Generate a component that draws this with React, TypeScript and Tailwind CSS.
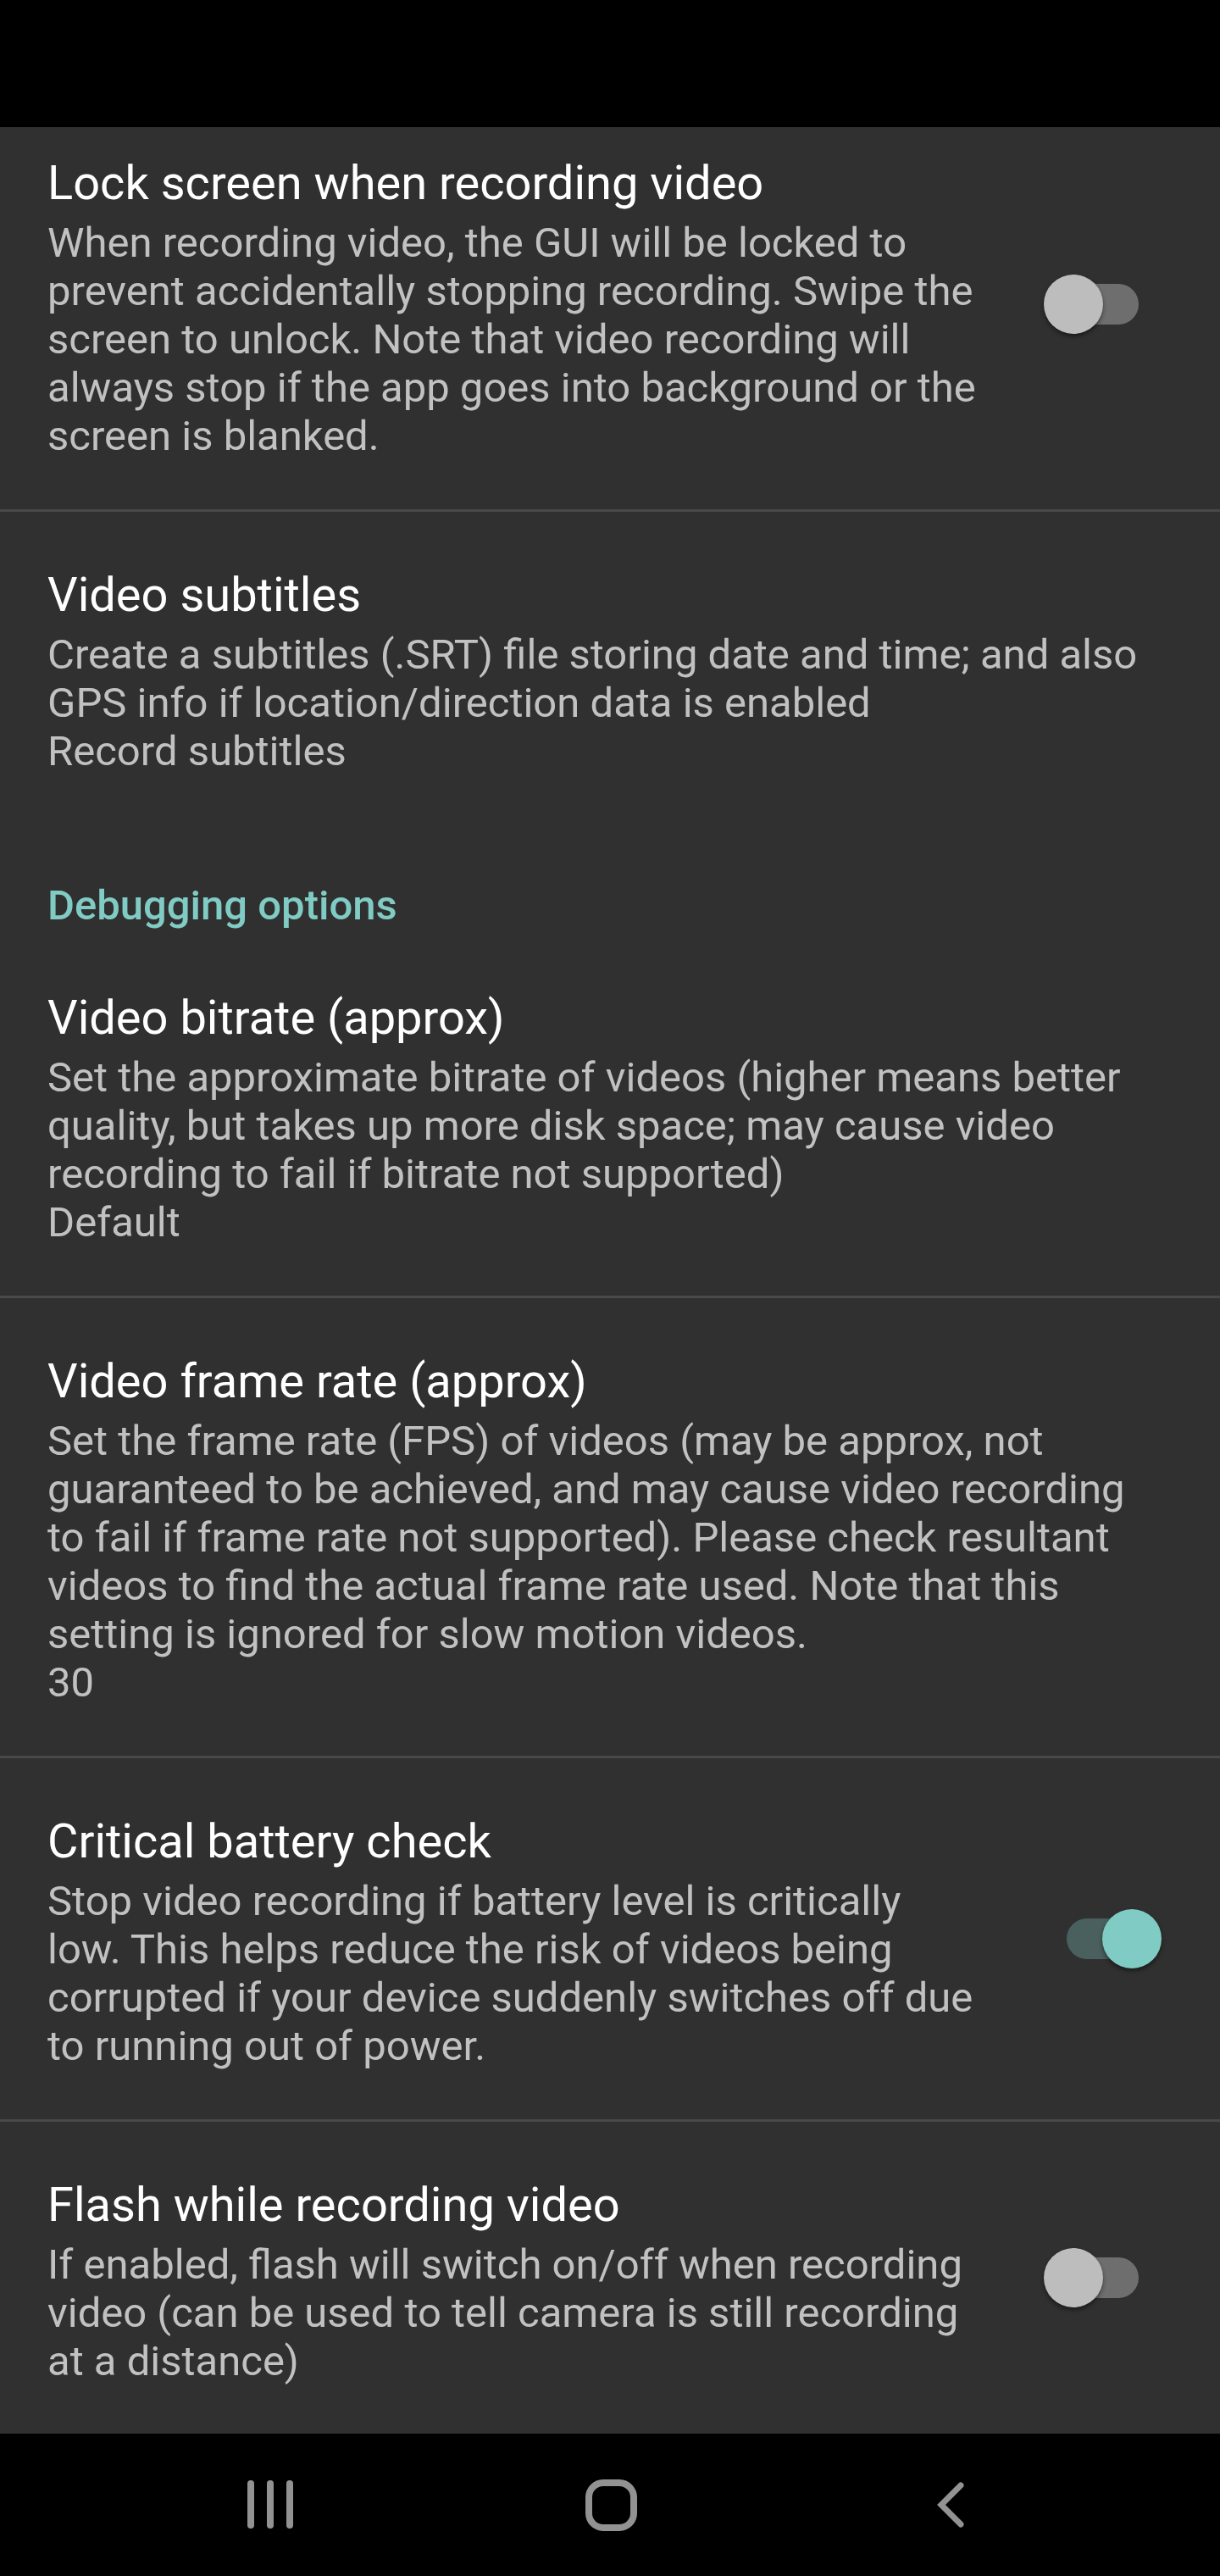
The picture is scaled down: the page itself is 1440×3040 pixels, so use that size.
import React from "react";

const font = { fontFamily: "Roboto, 'Noto Sans', Arial, sans-serif" };

function Switch({ on }: { on: boolean }) {
  return (
    <div className="relative ml-[57px] mb-[8px] h-[70px] w-[139px] shrink-0">
      <div
        className={
          "absolute left-[27px] top-[11px] h-[48px] w-[85px] rounded-full " +
          (on ? "bg-[#4a605e]" : "bg-[#6e6e6e]")
        }
      />
      <div
        className={
          "absolute top-0 h-[70px] w-[70px] rounded-full shadow-[0_3px_5px_rgba(0,0,0,0.45)] " +
          (on ? "right-0 bg-[#80cbc4]" : "left-0 bg-[#bdbdbd]")
        }
      />
    </div>
  );
}

function Pref({
  title,
  lines,
  toggle,
  pt = "pt-[65px]",
}: {
  title: string;
  lines: string[];
  toggle?: "on" | "off";
  pt?: string;
}) {
  return (
    <div className={"flex items-center pb-[58px] pl-[56px] " + pt + (toggle ? " pr-[69px]" : " pr-[56px]")}>
      <div className="min-w-0 flex-1">
        <div className="text-[56px] leading-[66px] text-white">{title}</div>
        <div className="mt-[9px] text-[49px] leading-[57px] text-[#c1c1c1]">
          {lines.map((l, i) => (
            <div key={i} className="whitespace-nowrap">
              {l}
            </div>
          ))}
        </div>
      </div>
      {toggle && <Switch on={toggle === "on"} />}
    </div>
  );
}

function Divider() {
  return <div className="h-[3px] w-full bg-[#494949]" />;
}

export default function App() {
  return (
    <div className="flex h-[3040px] w-[1440px] flex-col bg-black" style={font}>
      <div className="h-[150px] shrink-0 bg-black" />
      <div className="h-[2722px] shrink-0 overflow-hidden bg-[#303030]">
        <Pref
          pt="pt-[33px]"
          title="Lock screen when recording video"
          toggle="off"
          lines={[
            "When recording video, the GUI will be locked to",
            "prevent accidentally stopping recording. Swipe the",
            "screen to unlock. Note that video recording will",
            "always stop if the app goes into background or the",
            "screen is blanked.",
          ]}
        />
        <Divider />
        <Pref
          title="Video subtitles"
          lines={[
            "Create a subtitles (.SRT) file storing date and time; and also",
            "GPS info if location/direction data is enabled",
            "Record subtitles",
          ]}
        />
        <div className="pl-[56px] pt-[67px] pb-[6px] text-[49px] font-medium leading-[57px] text-[#80cbc4]">
          Debugging options
        </div>
        <Pref
          title="Video bitrate (approx)"
          lines={[
            "Set the approximate bitrate of videos (higher means better",
            "quality, but takes up more disk space; may cause video",
            "recording to fail if bitrate not supported)",
            "Default",
          ]}
        />
        <Divider />
        <Pref
          title="Video frame rate (approx)"
          lines={[
            "Set the frame rate (FPS) of videos (may be approx, not",
            "guaranteed to be achieved, and may cause video recording",
            "to fail if frame rate not supported). Please check resultant",
            "videos to find the actual frame rate used. Note that this",
            "setting is ignored for slow motion videos.",
            "30",
          ]}
        />
        <Divider />
        <Pref
          title="Critical battery check"
          toggle="on"
          lines={[
            "Stop video recording if battery level is critically",
            "low. This helps reduce the risk of videos being",
            "corrupted if your device suddenly switches off due",
            "to running out of power.",
          ]}
        />
        <Divider />
        <Pref
          title="Flash while recording video"
          toggle="off"
          lines={[
            "If enabled, flash will switch on/off when recording",
            "video (can be used to tell camera is still recording",
            "at a distance)",
          ]}
        />
      </div>
      <div className="flex h-[168px] shrink-0 items-center justify-center gap-[321px] bg-black">
        <svg width="80" height="80" viewBox="0 0 80 80" fill="none" stroke="#929292" strokeWidth="8" strokeLinecap="round">
          <line x1="17" y1="15" x2="17" y2="64" />
          <line x1="40" y1="15" x2="40" y2="64" />
          <line x1="63" y1="15" x2="63" y2="64" />
        </svg>
        <svg width="80" height="80" viewBox="0 0 80 80" fill="none" stroke="#929292" strokeWidth="8">
          <rect x="15" y="14" width="53" height="53" rx="17" />
        </svg>
        <svg width="80" height="80" viewBox="0 0 80 80" fill="none" stroke="#929292" strokeWidth="7" strokeLinecap="round" strokeLinejoin="miter">
          <polyline points="53,17 30,40 53,63" />
        </svg>
      </div>
    </div>
  );
}
